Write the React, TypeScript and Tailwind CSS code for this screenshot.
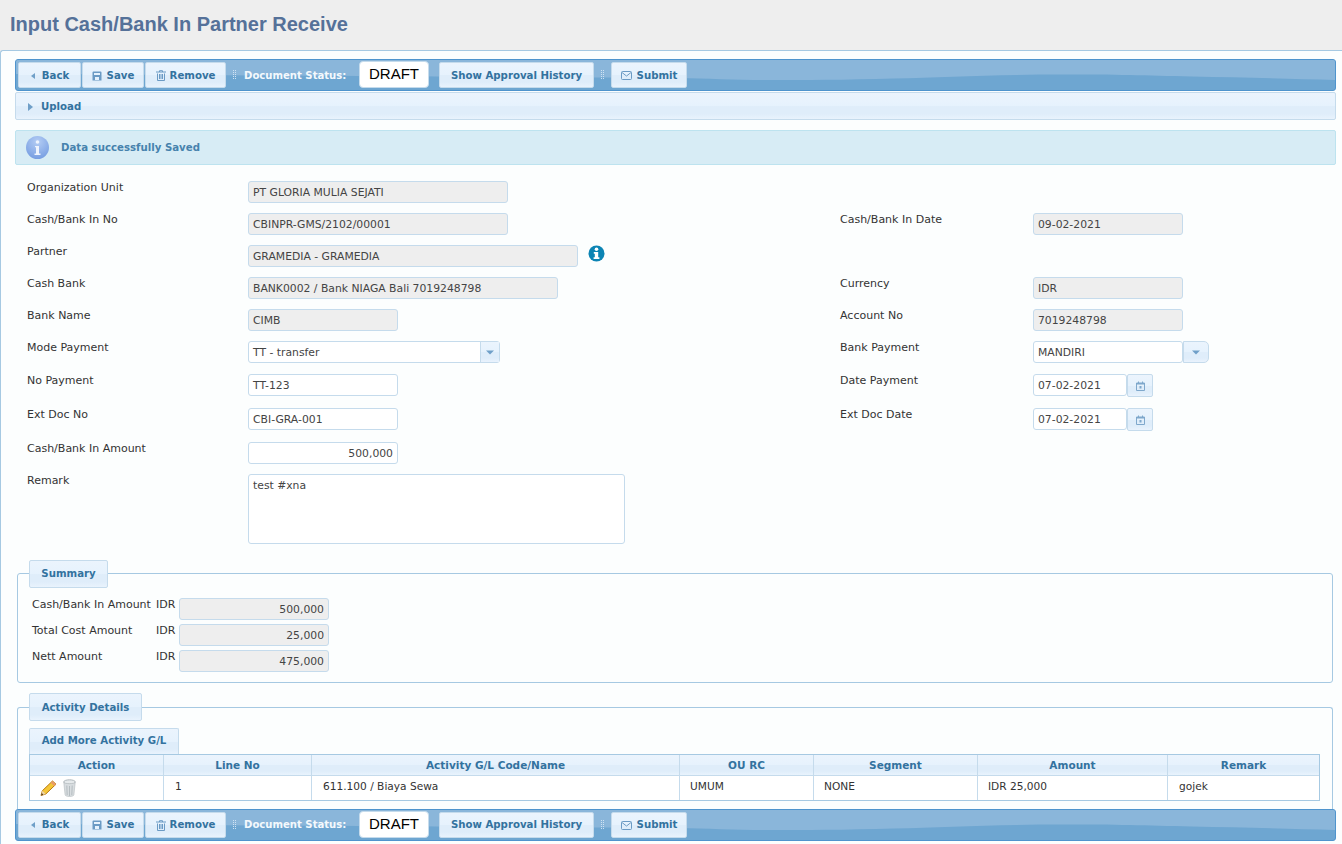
import { ReactNode } from "react"

const inputBase =
  "flex h-[22px] items-center rounded-[3px] border border-[#c5dbec] px-[4px] pt-[2px] text-[10.8px] text-[#444444]"

const btnFace =
  "bg-[linear-gradient(#ebf4fd_0%,#e6f2fd_50%,#dfedfa_52%,#dfedfa_80%,#e9f3fd_100%)]"

const btnText = "text-[10.2px] font-bold text-[#33729f]"

function Field({
  value,
  width,
  readOnly,
  right,
}: {
  value: string
  width: string
  readOnly?: boolean
  right?: boolean
}) {
  return (
    <div
      className={`${inputBase} ${width} ${readOnly ? "bg-[#eeeeee]" : "bg-white"} ${right ? "justify-end" : ""}`}
    >
      {value}
    </div>
  )
}

function Row({
  height,
  left,
  right,
  leftControl,
  rightControl,
}: {
  height: string
  left?: string
  right?: string
  leftControl?: ReactNode
  rightControl?: ReactNode
}) {
  return (
    <div className={`flex ${height}`}>
      <div className="flex w-[813px]">
        <div className="w-[221px] leading-[13px] text-[#333333]">{left}</div>
        {leftControl}
      </div>
      <div className="flex">
        <div className="w-[193px] leading-[13px] text-[#333333]">{right}</div>
        {rightControl}
      </div>
    </div>
  )
}

function TriLeft() {
  return (
    <svg width="6" height="8" viewBox="0 0 6 8" className="mr-[6px]">
      <path d="M5 1v6L1 4z" fill="#6f9fc8" />
    </svg>
  )
}

function SaveIcon() {
  return (
    <svg width="10" height="10" viewBox="0 0 10 10" className="mr-[5px]">
      <path d="M.5 1.500a1 1 0 0 1 1-1h7a1 1 0 0 1 1 1v8h-9z" fill="#6b9ac4" />
      <path d="M2 2h6v2H2zM3 6h4v3H3z" fill="#e6f2fd" />
    </svg>
  )
}

function TrashIcon() {
  return (
    <svg width="10" height="11" viewBox="0 0 10 11" className="mr-[4px]">
      <path d="M0 2h10M3.500 2V.7h3V2M1.500 3.500v7h7v-7M3.500 4v5M5 4v5M6.500 4v5" stroke="#6b9ac4" strokeWidth="1" fill="none" />
    </svg>
  )
}

function MailIcon() {
  return (
    <svg width="11" height="9" viewBox="0 0 11 9" className="mr-[5px]">
      <rect x=".5" y=".5" width="10" height="8" rx="1" fill="none" stroke="#6b9ac4" />
      <path d="M1 1.500l4.500 3.500L10 1.500" fill="none" stroke="#6b9ac4" />
    </svg>
  )
}

function CalendarIcon() {
  return (
    <svg width="9" height="10" viewBox="0 0 9 10">
      <path d="M.5 2h8v7.500h-8zM2.500 .5v2M6.500 .5v2" fill="none" stroke="#7fa8cc" />
      <path d="M.5 2h8v1.500h-8zM3.500 5h2v2.500h-2z" fill="#7fa8cc" />
    </svg>
  )
}

function ArrowDown() {
  return (
    <svg width="8" height="5" viewBox="0 0 8 5">
      <path d="M0 .5h8L4 4.500z" fill="#6f9fc8" />
    </svg>
  )
}

function ToolButton({
  children,
  width,
  raised,
}: {
  children: ReactNode
  width: string
  raised?: boolean
}) {
  return (
    <div
      className={`flex h-[26px] shrink-0 items-center justify-center rounded-[2px] border border-[#c5dbec] ${raised ? "" : "pt-[1px]"} ${btnFace} ${btnText} ${width}`}
    >
      {children}
    </div>
  )
}

function Grip({ className }: { className: string }) {
  return (
    <svg width="3" height="10" viewBox="0 0 3 10" className={`shrink-0 ${className}`}>
      <path
        d="M0 0h1v1H0zM2 0h1v1H2zM0 2h1v1H0zM2 2h1v1H2zM0 4h1v1H0zM2 4h1v1H2zM0 6h1v1H0zM2 6h1v1H2zM0 8h1v1H0zM2 8h1v1H2z"
        fill="#cfe2f3"
      />
    </svg>
  )
}

function Toolbar({ raised }: { raised?: boolean }) {
  return (
    <div className="relative h-[32px] overflow-hidden rounded-[3px] border border-[#4f94cd] bg-[#6ea6d1]">
      <svg className="absolute inset-0 h-full w-full" viewBox="0 0 1320 30" preserveAspectRatio="none">
        <path
          d="M0 0H1320V20C1280 19 1230 17.500 1177 16.500C1130 15.500 1100 14.500 1049 14.500C980 14.500 930 17 878 18.500C830 20 790 20 749 20C720 20 690 18.500 664 18C500 17 300 16 0 14Z"
          fill="#8ab6da"
        />
      </svg>
      <div className="relative flex h-full items-center pl-[2px]">
        <ToolButton raised={raised} width="w-[63px]">
          <TriLeft />
          Back
        </ToolButton>
        <ToolButton raised={raised} width="w-[62px] ml-[1px]">
          <SaveIcon />
          Save
        </ToolButton>
        <ToolButton raised={raised} width="w-[81px] ml-[1px]">
          <TrashIcon />
          Remove
        </ToolButton>
        <Grip className="ml-[7px] mr-[8px]" />
        <span className={`w-[102px] shrink-0 whitespace-nowrap text-[10.1px] font-bold text-[#f4f9fd] ${raised ? "" : "pt-[1px]"}`}>
          Document Status:
        </span>
        <div className="mb-[1px] ml-[13px] flex h-[27px] w-[70px] shrink-0 items-center justify-center rounded-[4px] border border-[#c5dbec] bg-white font-['Liberation_Sans',sans-serif] text-[15px] text-black">
          DRAFT
        </div>
        <ToolButton raised={raised} width="w-[155px] ml-[10px]">Show Approval History</ToolButton>
        <Grip className="ml-[7px] mr-[7px]" />
        <ToolButton raised={raised} width="w-[76px]">
          <MailIcon />
          Submit
        </ToolButton>
      </div>
    </div>
  )
}

function Legend({ children, width }: { children: ReactNode; width: string }) {
  return (
    <div
      className={`flex h-[28px] items-center justify-center rounded-[2px] border border-[#c5dbec] ${btnFace} ${btnText} ${width}`}
    >
      {children}
    </div>
  )
}

function SummaryRow({ label, value }: { label: string; value: string }) {
  return (
    <div className="flex h-[26px]">
      <div className="w-[124px] leading-[13px] text-[#333333]">{label}</div>
      <div className="w-[23px] leading-[13px] text-[#333333]">IDR</div>
      <Field value={value} width="w-[150px]" readOnly right />
    </div>
  )
}

const columns = [
  { label: "Action", width: "w-[134px]" },
  { label: "Line No", width: "w-[148px]" },
  { label: "Activity G/L Code/Name", width: "w-[368px]" },
  { label: "OU RC", width: "w-[134px]" },
  { label: "Segment", width: "w-[164px]" },
  { label: "Amount", width: "w-[190px]" },
  { label: "Remark", width: "flex-1" },
]

function Pencil() {
  return (
    <svg width="17" height="16" viewBox="0 0 17 16">
      <path d="M12.500 1l3.500 3.200L5.800 14 1 15.500l1.300-4.700z" fill="#f5c637" stroke="#b97a12" strokeWidth="1" />
      <path d="M12.500 1l3.500 3.200-1.800 1.800-3.500-3.200z" fill="#e89a6a" />
      <path d="M1 15.500l1.300-4.700 3.500 3.200z" fill="#ecd3a6" />
      <path d="M1 15.500l.7-2.400 1.700 1.700z" fill="#5a3a10" />
    </svg>
  )
}

function TrashCan() {
  return (
    <svg width="13" height="18" viewBox="0 0 13 18">
      <ellipse cx="6.500" cy="3" rx="5.800" ry="2.200" fill="#e6eaec" stroke="#aeb6ba" />
      <path d="M.8 3.500l1.300 12.300c.1 1 1.900 1.700 4.400 1.700s4.300-.7 4.400-1.700l1.300-12.300c-1 1.500-10.400 1.500-11.400 0z" fill="#d8dde0" stroke="#b3babe" strokeWidth=".6" />
      <path d="M3.800 6.500l.4 9.500M6.500 7v10M9.200 6.500l-.4 9.500" stroke="#b0b8bc" strokeWidth=".9" />
    </svg>
  )
}

export default function App() {
  return (
    <div className="h-[844px] w-[1342px] overflow-hidden bg-[#eeeeee] font-['DejaVu_Sans',sans-serif] text-[11px]">
      <div className="flex h-[50px] items-center pb-[2px] pl-[10px]">
        <h1 className="font-['Liberation_Sans',sans-serif] text-[20px] font-bold text-[#557199]">
          Input Cash/Bank In Partner Receive
        </h1>
      </div>

      <div className="h-[794px] rounded-tl-[3px] border-l border-t border-[#a6c9e2] bg-[#fcfefe] pl-[14px] pr-[6px] pt-[8px]">
        <Toolbar />

        <div className={`mt-[1px] flex h-[28px] items-center rounded-[2px] border border-[#c5dbec] pl-[12px] pt-[1px] ${btnFace} ${btnText}`}>
          <svg width="5" height="8" viewBox="0 0 5 8" className="mr-[8px]">
            <path d="M0 0l5 4-5 4z" fill="#6f9fc8" />
          </svg>
          Upload
        </div>

        <div className="mt-[10px] flex h-[35px] items-center rounded-[2px] border border-[#bde3ef] bg-[#d7ecf5] pl-[10px] text-[10.2px] font-bold text-[#4682ad]">
          <div className="mr-[12px] flex h-[23px] w-[23px] items-center justify-center rounded-full bg-[radial-gradient(circle_at_50%_25%,#b4cdf4,#6b95de)]">
            <svg width="7" height="15" viewBox="0 0 7 15">
              <circle cx="3.500" cy="2" r="1.800" fill="#eef4fd" />
              <path d="M1 6h4v7.500h1.500V15H.5v-1.500H2V7.200H1z" fill="#eef4fd" />
            </svg>
          </div>
          <span className="pt-[1px]">Data successfully Saved</span>
        </div>

        <div className="pl-[12px] pt-[16px]">
          <Row height="h-[32px]" left="Organization Unit" leftControl={<Field value="PT GLORIA MULIA SEJATI" width="w-[260px]" readOnly />} />
          <Row
            height="h-[32px]"
            left="Cash/Bank In No"
            leftControl={<Field value="CBINPR-GMS/2102/00001" width="w-[260px]" readOnly />}
            right="Cash/Bank In Date"
            rightControl={<Field value="09-02-2021" width="w-[150px]" readOnly />}
          />
          <Row
            height="h-[32px]"
            left="Partner"
            leftControl={
              <>
                <Field value="GRAMEDIA - GRAMEDIA" width="w-[330px]" readOnly />
                <svg width="17" height="17" viewBox="0 0 17 17" className="ml-[10px]">
                  <circle cx="8.500" cy="8.500" r="8" fill="#0c84b4" />
                  <circle cx="8.500" cy="4.300" r="1.800" fill="#fff" />
                  <path d="M5.800 7h4.400v5.200h1.200V14H5.600v-1.800h1.200V8.800h-1z" fill="#fff" />
                </svg>
              </>
            }
          />
          <Row
            height="h-[32px]"
            left="Cash Bank"
            leftControl={<Field value="BANK0002 / Bank NIAGA Bali 7019248798" width="w-[310px]" readOnly />}
            right="Currency"
            rightControl={<Field value="IDR" width="w-[150px]" readOnly />}
          />
          <Row
            height="h-[32px]"
            left="Bank Name"
            leftControl={<Field value="CIMB" width="w-[150px]" readOnly />}
            right="Account No"
            rightControl={<Field value="7019248798" width="w-[150px]" readOnly />}
          />
          <Row
            height="h-[33px]"
            left="Mode Payment"
            leftControl={
              <div className="flex h-[22px] w-[252px] rounded-[3px] border border-[#c5dbec] bg-white">
                <div className="flex flex-1 items-center px-[4px] pt-[2px] text-[10.8px] text-[#444444]">TT - transfer</div>
                <div className={`flex w-[19px] items-center justify-center border-l border-[#c5dbec] ${btnFace}`}>
                  <ArrowDown />
                </div>
              </div>
            }
            right="Bank Payment"
            rightControl={
              <div className="flex">
                <Field value="MANDIRI" width="w-[150px]" />
                <div className={`flex h-[22px] w-[26px] items-center justify-center rounded-r-[5px] border border-[#c5dbec] ${btnFace}`}>
                  <ArrowDown />
                </div>
              </div>
            }
          />
          {[
            { left: "No Payment", leftValue: "TT-123", right: "Date Payment" },
            { left: "Ext Doc No", leftValue: "CBI-GRA-001", right: "Ext Doc Date" },
          ].map((item) => (
            <Row
              key={item.left}
              height="h-[34px]"
              left={item.left}
              leftControl={<Field value={item.leftValue} width="w-[150px]" />}
              right={item.right}
              rightControl={
                <div className="flex">
                  <Field value="07-02-2021" width="w-[94px]" />
                  <div className={`flex h-[23px] w-[26px] items-center justify-center rounded-[2px] border border-[#c5dbec] ${btnFace}`}>
                    <CalendarIcon />
                  </div>
                </div>
              }
            />
          ))}
          <Row height="h-[32px]" left="Cash/Bank In Amount" leftControl={<Field value="500,000" width="w-[150px]" right />} />
          <Row
            height="h-[70px]"
            left="Remark"
            leftControl={
              <div className="h-[70px] w-[377px] rounded-[3px] border border-[#c5dbec] bg-white p-[4px] text-[10.8px] leading-[13px] text-[#444444]">
                test #xna
              </div>
            }
          />
        </div>

        <div className="relative ml-[2px] mr-[3px] mt-[29px] h-[110px] rounded-[3px] border border-[#a6c9e2] pl-[14px] pt-[24px]">
          <div className="absolute left-[11px] top-[-14px]">
            <Legend width="w-[79px]">Summary</Legend>
          </div>
          <SummaryRow label="Cash/Bank In Amount" value="500,000" />
          <SummaryRow label="Total Cost Amount" value="25,000" />
          <SummaryRow label="Nett Amount" value="475,000" />
        </div>

        <div className="relative ml-[2px] mr-[3px] mt-[24px] h-[102px] rounded-t-[3px] border border-b-0 border-[#a6c9e2] pl-[11px] pr-[12px] pt-[20px]">
          <div className="absolute left-[11px] top-[-15px]">
            <Legend width="w-[113px] pt-[2px]">Activity Details</Legend>
          </div>
          <div className={`flex h-[26px] w-[150px] items-center justify-center rounded-t-[2px] border border-b-0 border-[#c5dbec] pb-[2px] ${btnFace} ${btnText}`}>
            Add More Activity G/L
          </div>
          <div className="border border-[#a6c9e2]">
            <div className={`flex h-[21px] border-b border-[#c5dbec] ${btnFace}`}>
              {columns.map((col) => (
                <div
                  key={col.label}
                  className={`flex items-center justify-center border-r border-[#c5dbec] pt-[1px] text-[10.5px] font-bold text-[#33729f] last:border-r-0 ${col.width}`}
                >
                  {col.label}
                </div>
              ))}
            </div>
            <div className="flex h-[24px] bg-white text-[10.6px] text-[#333333]">
              <div className="flex w-[134px] items-center gap-[6px] border-r border-[#c5dbec] pl-[10px]">
                <Pencil />
                <TrashCan />
              </div>
              <div className="w-[148px] border-r border-[#c5dbec] pl-[11px] pt-[3px]">1</div>
              <div className="w-[368px] border-r border-[#c5dbec] pl-[11px] pt-[3px]">611.100 / Biaya Sewa</div>
              <div className="w-[134px] border-r border-[#c5dbec] pl-[10px] pt-[3px]">UMUM</div>
              <div className="w-[164px] border-r border-[#c5dbec] pl-[10px] pt-[3px]">NONE</div>
              <div className="w-[190px] border-r border-[#c5dbec] pl-[10px] pt-[3px]">IDR 25,000</div>
              <div className="flex-1 pl-[11px] pt-[3px]">gojek</div>
            </div>
          </div>
        </div>

        <Toolbar raised />
      </div>
    </div>
  )
}
